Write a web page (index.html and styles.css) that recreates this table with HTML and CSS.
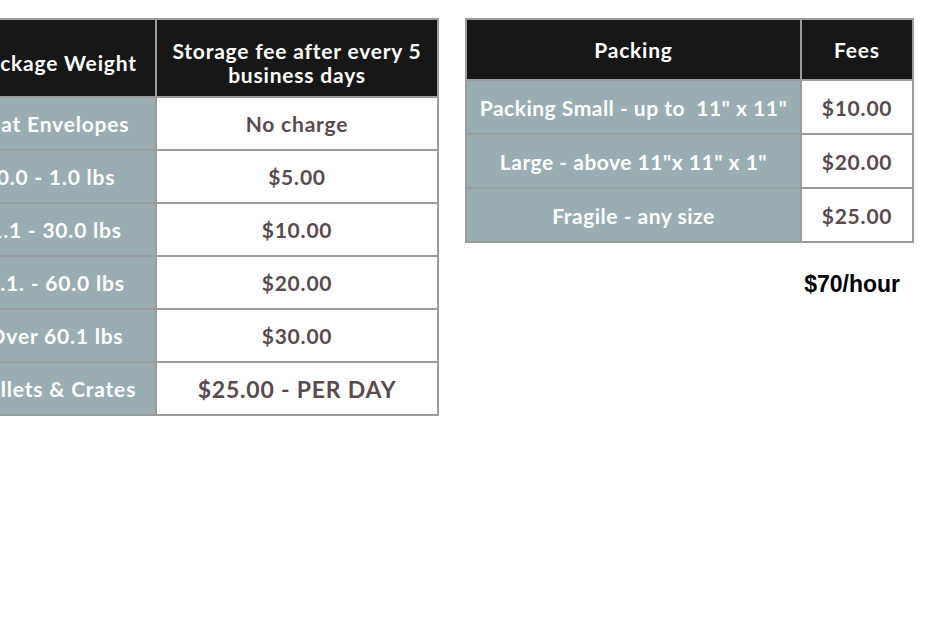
FILE: index.html
```html
<!DOCTYPE html>
<html>
<head>
<meta charset="utf-8">
<link rel="stylesheet" href="styles.css">
</head>
<body>
<div class="page">
  <table class="fees storage">
    <colgroup><col class="c1"><col class="c2"></colgroup>
    <thead>
      <tr class="head"><th>Package Weight</th><th>Storage fee after every 5<br>business days</th></tr>
    </thead>
    <tbody>
      <tr><td class="label">Flat Envelopes</td><td class="val">No charge</td></tr>
      <tr><td class="label">0.0 - 1.0 lbs</td><td class="val">$5.00</td></tr>
      <tr><td class="label">1.1 - 30.0 lbs</td><td class="val">$10.00</td></tr>
      <tr><td class="label">3.1. - 60.0 lbs</td><td class="val">$20.00</td></tr>
      <tr><td class="label">Over 60.1 lbs</td><td class="val">$30.00</td></tr>
      <tr><td class="label">Pallets &amp; Crates</td><td class="val big">$25.00 - PER DAY</td></tr>
    </tbody>
  </table>
  <div class="right">
    <table class="fees packing">
      <colgroup><col class="p1"><col class="p2"></colgroup>
      <thead>
        <tr class="head"><th>Packing</th><th>Fees</th></tr>
      </thead>
      <tbody>
        <tr><td class="label">Packing Small - up to &nbsp;11" x 11"</td><td class="val">$10.00</td></tr>
        <tr><td class="label">Large - above 11"x 11" x 1"</td><td class="val">$20.00</td></tr>
        <tr><td class="label">Fragile - any size</td><td class="val">$25.00</td></tr>
      </tbody>
    </table>
    <div class="hourly">$70/hour</div>
  </div>
</div>
</body>
</html>
```
FILE: styles.css
```css
html, body {
  margin: 0;
  padding: 0;
  background: #ffffff;
}
.page {
  display: flex;
  align-items: flex-start;
  gap: 26px;
  padding-top: 18px;
  overflow: hidden;
  width: 930px;
  height: 620px;
}
.fees {
  border-collapse: collapse;
  font-family: Lato, "Open Sans", sans-serif;
  font-weight: 700;
  table-layout: fixed;
  letter-spacing: 0.8px;
}
.fees th, .fees td {
  border: 2px solid #9c9c9c;
  text-align: center;
  padding: 0;
  white-space: nowrap;
}
.fees .head th {
  background: #171717;
  color: #ffffff;
  font-size: 21px;
  line-height: 23px;
  border-color: #9c9c9c;
}
.fees .head th + th {
  border-left-color: #5a5a5a;
}
.storage .head th {
  padding-top: 10px;
  line-height: 24px;
}
.fees td.label {
  background: #9aadb3;
  color: #ffffff;
  font-size: 21px;
}
.packing td.label {
  letter-spacing: 0.5px;
}
.fees td.val {
  background: #ffffff;
  color: #5a4a50;
  font-size: 21px;
}
.fees td.val.big {
  font-size: 23px;
}
.storage {
  margin-left: -45px;
  width: 482px;
  flex: none;
}
.storage col.c1 { width: 200px; }
.storage col.c2 { width: 282px; }
.storage .head { height: 78px; }
.storage tbody tr { height: 53px; }
.right {
  display: flex;
  flex-direction: column;
  flex: none;
  width: 447px;
}
.packing {
  width: 447px;
}
.packing col.p1 { width: 335px; }
.packing col.p2 { width: 112px; }
.packing .head { height: 61px; }
.packing tbody tr { height: 54px; }
.hourly {
  font-family: "Liberation Sans", Arial, sans-serif;
  font-weight: 700;
  font-size: 23px;
  color: #000000;
  text-align: right;
  padding-right: 12px;
  margin-top: 28px;
}
```
